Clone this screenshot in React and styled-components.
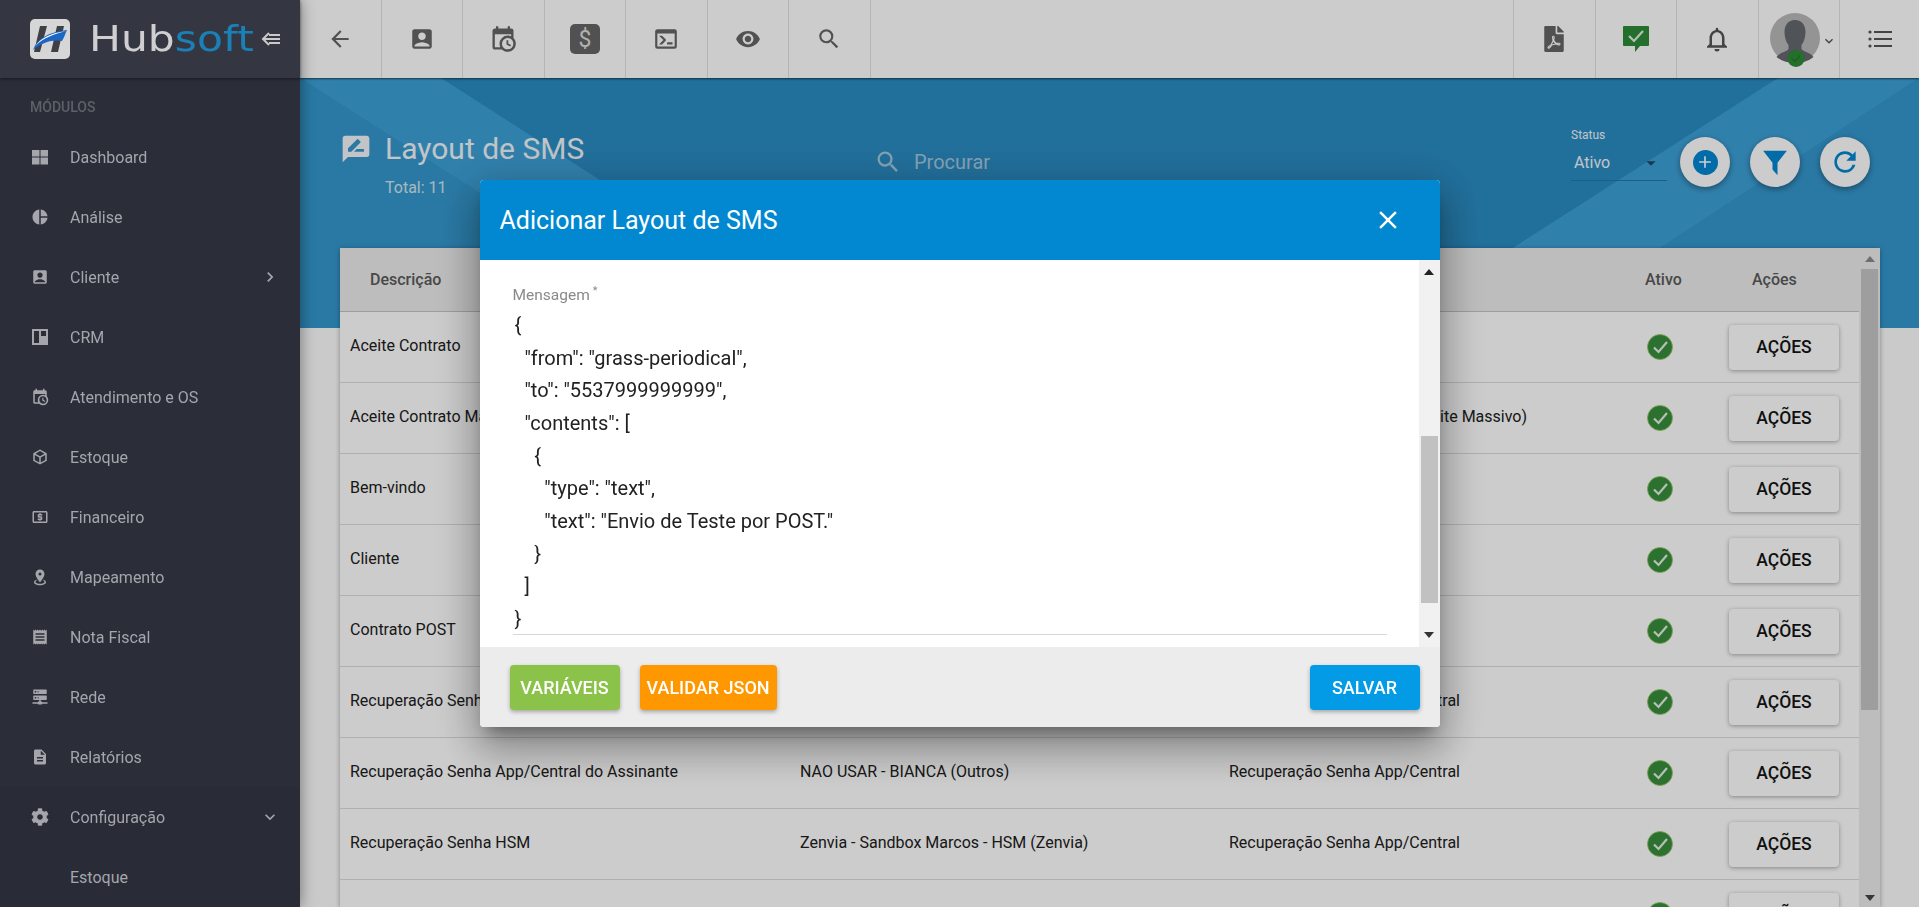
import React from "react";
import styled, { createGlobalStyle } from "styled-components";
import {
  MdArrowBack,
  MdAccountBox,
  MdVisibility,
  MdSearch,
  MdPieChart,
  MdLocalAtm,
  MdReceipt,
  MdDescription,
  MdChevronRight,
  MdExpandMore,
  MdClose,
  MdAdd,
  MdRefresh,
  MdArrowDropDown,
} from "react-icons/md";
import { FaCog, FaFilePdf } from "react-icons/fa";

const GlobalStyle = createGlobalStyle`
  html, body {
    margin: 0;
    height: 100%;
    overflow: hidden;
    background: #fff;
    font-family: Roboto, "Liberation Sans", sans-serif;
  }
  * { box-sizing: border-box; }
`;

const CALENDAR_CLOCK =
  "M15,13H16.5V15.82L18.94,17.23L18.19,18.53L15,16.69V13M19,8H5V19H9.67C9.24,18.09 9,17.07 9,16A7,7 0 0,1 16,9C17.07,9 18.09,9.24 19,9.67V8M5,21C3.89,21 3,20.1 3,19V5C3,3.89 3.89,3 5,3H6V1H8V3H16V1H18V3H19A2,2 0 0,1 21,5V11.1C22.24,12.36 23,14.09 23,16A7,7 0 0,1 16,23C14.09,23 12.36,22.24 11.1,21H5M16,11.15A4.85,4.85 0 0,0 11.15,16C11.15,18.68 13.32,20.85 16,20.85A4.85,4.85 0 0,0 20.85,16C20.85,13.32 18.68,11.15 16,11.15Z";
const CUBE =
  "M21,16.5C21,16.88 20.79,17.21 20.47,17.38L12.57,21.82C12.41,21.94 12.21,22 12,22C11.79,22 11.59,21.94 11.43,21.82L3.53,17.38C3.21,17.21 3,16.88 3,16.5V7.5C3,7.12 3.21,6.79 3.53,6.62L11.43,2.18C11.59,2.06 11.79,2 12,2C12.21,2 12.41,2.06 12.57,2.18L20.47,6.62C20.79,6.79 21,7.12 21,7.5V16.5M12,4.15L6.04,7.5L12,10.85L17.96,7.5L12,4.15M5,15.91L11,19.29V12.58L5,9.21V15.91M19,15.91V9.21L13,12.58V19.29L19,15.91Z";
const MARKER =
  "M12,2C15.31,2 18,4.66 18,7.95C18,12.41 12,19 12,19C12,19 6,12.41 6,7.95C6,4.66 8.69,2 12,2M12,6A2,2 0 0,0 10,8A2,2 0 0,0 12,10A2,2 0 0,0 14,8A2,2 0 0,0 12,6M20,19C20,21.21 16.42,23 12,23C7.58,23 4,21.21 4,19C4,17.71 5.22,16.56 7.11,15.83L7.75,16.74C6.67,17.19 6,17.81 6,18.5C6,19.88 8.69,21 12,21C15.31,21 18,19.88 18,18.5C18,17.81 17.33,17.19 16.25,16.74L16.89,15.83C18.78,16.56 20,17.71 20,19Z";
const SERVER =
  "M13,18H14A1,1 0 0,1 15,19H22V21H15A1,1 0 0,1 14,22H10A1,1 0 0,1 9,21H2V19H9A1,1 0 0,1 10,18H11V16H4A1,1 0 0,1 3,15V11A1,1 0 0,1 4,10H20A1,1 0 0,1 21,11V15A1,1 0 0,1 20,16H13V18M4,2H20A1,1 0 0,1 21,3V7A1,1 0 0,1 20,8H4A1,1 0 0,1 3,7V3A1,1 0 0,1 4,2M9,6H10V4H9V6M9,14H10V12H9V14M5,4V6H7V4H5M5,12V14H7V12H5Z";
const MESSAGE_DRAW =
  "M18,14H10.5L12.5,12H18M6,14V11.5L12.88,4.64C13.07,4.45 13.39,4.45 13.59,4.64L15.35,6.41C15.55,6.61 15.55,6.92 15.35,7.12L8.47,14M20,2H4A2,2 0 0,0 2,4V22L6,18H20A2,2 0 0,0 22,16V4C22,2.89 21.1,2 20,2Z";
const BELL =
  "M16,17H8V11C8,8.5 9.800,6.500 12,6.500C14.200,6.500 16,8.500 16,11M18,16V11C18,7.900 15.900,5.400 13,4.700V4A1,1 0 0,0 11,4V4.700C8.100,5.400 6,7.900 6,11V16L4,18V19H20V18M12,22A2,2 0 0,0 14,20H10A2,2 0 0,0 12,22Z";
const FILTER = "M2.5,3H21.5L14,12.5V22.5L10,18V12.5Z";
const CONSOLE =
  "M20,19V7H4V19H20M20,3A2,2 0 0,1 22,5V19A2,2 0 0,1 20,21H4A2,2 0 0,1 2,19V5C2,3.89 2.9,3 4,3H20M13,17V15H18V17H13M9.58,13L5.57,9H8.4L11.7,12.3C12.09,12.69 12.09,13.33 11.7,13.72L8.42,17H5.59L9.58,13Z";

const Glyph = ({ d, size = 24, color = "currentColor" }) => (
  <svg width={size} height={size} viewBox="0 0 24 24" fill={color}>
    <path d={d} />
  </svg>
);

const GridIcon = () => (
  <svg width="18" height="18" viewBox="0 0 18 18" fill="currentColor">
    <rect x="1" y="2" width="7.5" height="6.5" />
    <rect x="9.5" y="2" width="7.5" height="6.5" />
    <rect x="1" y="9.5" width="7.5" height="7" />
    <rect x="9.5" y="9.5" width="7.5" height="7" />
  </svg>
);

const BoardIcon = () => (
  <svg width="18" height="18" viewBox="0 0 18 18">
    <path fill="currentColor" fillRule="evenodd" d="M1 1h16v16H1zM3 3v12h5V3zM10 3v5h5V3z" />
  </svg>
);

const DollarBox = () => (
  <svg width="30" height="30" viewBox="0 0 30 30">
    <rect x="0" y="0" width="30" height="30" rx="5" fill="#666" />
    <text x="15" y="23" textAnchor="middle" fontSize="23" fill="#ddd" fontFamily="Roboto">$</text>
  </svg>
);

const ChatCheck = () => (
  <svg width="26" height="26" viewBox="0 0 26 26">
    <path d="M1 0h24a1 1 0 0 1 1 1v18a1 1 0 0 1-1 1h-8l-5 6v-6H1a1 1 0 0 1-1-1V1a1 1 0 0 1 1-1z" fill="#2e8b37" />
    <path d="M6 10l5 5 9-10" fill="none" stroke="#e3efe3" strokeWidth="2.2" />
  </svg>
);

const ListIcon = () => (
  <svg width="24" height="20" viewBox="0 0 24 20" fill="#555">
    <circle cx="2" cy="3" r="1.6" />
    <circle cx="2" cy="10" r="1.6" />
    <circle cx="2" cy="17" r="1.6" />
    <rect x="6" y="2" width="18" height="2" />
    <rect x="6" y="9" width="18" height="2" />
    <rect x="6" y="16" width="18" height="2" />
  </svg>
);

const Silhouette = () => (
  <svg width="50" height="54" viewBox="0 0 50 54">
    <circle cx="25" cy="25" r="25" fill="#b9b9b9" />
    <path
      d="M25 7c7 0 10.500 5 10.500 12 0 5-1.500 10-4 13v4c2 3 8 3 12 8-5 4-11 6-18.500 6s-13.500-2-18.500-6c4-5 10-5 12-8v-4c-2.500-3-4-8-4-13 0-7 3.500-12 10.500-12z"
      fill="#64686d"
    />
    <circle cx="26" cy="45.500" r="8.500" fill="#2e8b37" />
    <path d="M22 45.500l3 3 5-6" fill="none" stroke="#247a2e" strokeWidth="1.500" />
  </svg>
);

const SwitchArrow = () => (
  <svg width="20" height="14" viewBox="0 0 20 14" fill="none" stroke="#c9c9c9" strokeWidth="2">
    <path d="M8 1L2 7l6 6" />
    <path d="M3 7h16M8 3h11M8 11h11" />
  </svg>
);

const LogoMark = () => (
  <svg width="40" height="40" viewBox="0 0 40 40">
    <rect width="40" height="40" rx="5" fill="#d6d6d6" />
    <path d="M10 7h7l-7 26H4zM27 7h7l-6 26h-7z" fill="#3f4045" />
    <path d="M3 31C7 20 18 13 37 11c-2 4-3 8-5 11-8-2-20 1-29 9z" fill="#1c66c4" />
    <path d="M5 27C11 19 21 14 36 12 24 15 13 19 5 27z" fill="#fff" />
  </svg>
);

const CheckBadge = () => (
  <svg width="26" height="26" viewBox="0 0 26 26">
    <circle cx="13" cy="13" r="12.500" fill="#388e3c" stroke="#9ccc65" strokeWidth="0.800" />
    <path d="M7 13.500l4.500 4.500L20 8" fill="none" stroke="#e6efe2" strokeWidth="2.200" />
  </svg>
);

const Page = styled.div`
  display: flex;
  width: 100%;
  height: 100vh;
  overflow: hidden;
`;

const Sidebar = styled.aside`
  position: relative;
  z-index: 30;
  flex: 0 0 300px;
  display: flex;
  flex-direction: column;
  background: #2b2e39;
  color: #a4a6ac;
  box-shadow: 0 0 14px rgba(0, 0, 0, 0.45);
`;

const Brand = styled.div`
  flex: 0 0 78px;
  display: flex;
  align-items: center;
  padding-left: 30px;
  background: #343741;
  box-shadow: 0 1px 3px rgba(0, 0, 0, 0.5);
`;

const Wordmark = styled.span`
  margin: 0 21px 0 19px;
  font-family: "DejaVu Sans", sans-serif;
  font-size: 36px;
  line-height: 40px;
  color: #cfcfd1;
  transform: scaleX(1.18);
  transform-origin: left center;
  b {
    font-weight: 400;
    color: #1b80b8;
  }
`;

const Collapse = styled.span`
  display: flex;
  margin-left: 11px;
`;

const SectionLabel = styled.div`
  padding: 21px 0 0 30px;
  height: 49px;
  font-size: 14px;
  font-weight: 500;
  color: #5e6068;
`;

const Item = styled.div`
  flex: 0 0 60px;
  display: flex;
  align-items: center;
  padding-left: 31px;
  font-size: 16px;
  background: ${(p) => (p.$open ? "#292b36" : "transparent")};
`;

const ItemIcon = styled.span`
  flex: none;
  width: 18px;
  display: flex;
  justify-content: center;
  margin-right: 21px;
  font-size: 20px;
`;

const ItemArrow = styled.span`
  margin-left: auto;
  margin-right: 20px;
  display: flex;
  font-size: 20px;
`;

const Main = styled.div`
  flex: 1;
  min-width: 0;
  display: flex;
  flex-direction: column;
`;

const Toolbar = styled.header`
  position: relative;
  z-index: 2;
  flex: 0 0 78px;
  display: flex;
  background: #fff;
  box-shadow: 0 1px 2px rgba(0, 0, 0, 0.6);
`;

const ToolCell = styled.div`
  flex: 0 0 81.500px;
  display: flex;
  align-items: center;
  justify-content: center;
  color: #666;
  border-right: 1px solid #e2e2e2;
  font-size: 26px;
`;

const ToolSpacer = styled.div`
  flex: 1;
  border-right: 1px solid #e2e2e2;
`;

const AvatarCell = styled(ToolCell)`
  justify-content: flex-start;
  padding: 13px 0 0 11px;
  align-items: flex-start;
  overflow: hidden;
`;

const AvatarCaret = styled.span`
  margin: 20px 0 0 1px;
  display: flex;
  font-size: 16px;
  color: #555;
`;

const MenuCell = styled(ToolCell)`
  flex-basis: 79px;
  border-right: 0;
`;

const Content = styled.main`
  flex: 1;
  min-height: 0;
  background: #fdfdfd;
  display: flex;
  flex-direction: column;
`;

const Hero = styled.section`
  position: relative;
  flex: 0 0 250px;
  display: flex;
  align-items: flex-start;
  padding: 55px 49px 0 40px;
  background: #2a8cc3;
  overflow: hidden;
`;

const HeroPattern = styled.svg`
  position: absolute;
  inset: 0;
  width: 100%;
  height: 100%;
`;

const TitleBlock = styled.div`
  position: relative;
  flex: 0 0 534px;
`;

const TitleRow = styled.div`
  display: flex;
  align-items: center;
  gap: 13px;
  color: #f2f7fa;
`;

const PageTitle = styled.h1`
  margin: 0;
  font-size: 30px;
  font-weight: 400;
  line-height: 32px;
`;

const Total = styled.div`
  margin: 13px 0 0 45px;
  font-size: 16px;
  color: #d4e6f1;
`;

const SearchBox = styled.div`
  position: relative;
  flex: 1;
  display: flex;
  align-items: center;
  gap: 12px;
  margin-top: 15px;
  font-size: 20px;
  color: #a6cbe2;
`;

const StatusBox = styled.div`
  position: relative;
  flex: 0 0 96px;
  margin-top: -5px;
  height: 53px;
  border-bottom: 1px solid #2577a6;
  color: #f2f7fa;
`;

const StatusLabel = styled.div`
  font-size: 12px;
  line-height: 14px;
`;

const StatusValue = styled.div`
  display: flex;
  align-items: center;
  justify-content: space-between;
  margin: 10px 8px 0 3px;
  font-size: 16px;
  line-height: 20px;
  svg {
    color: #1b4a66;
    margin-right: -3px;
  }
`;

const RoundButtons = styled.div`
  position: relative;
  display: flex;
  gap: 20px;
  margin: 4px 0 0 13px;
`;

const RoundButton = styled.button`
  width: 50px;
  height: 50px;
  padding: 0;
  border: 0;
  border-radius: 50%;
  display: flex;
  align-items: center;
  justify-content: center;
  background: #fff;
  color: #0288d1;
  box-shadow: 0 2px 6px rgba(0, 0, 0, 0.4);
`;

const PlusDisc = styled.span`
  width: 25px;
  height: 25px;
  border-radius: 50%;
  display: flex;
  align-items: center;
  justify-content: center;
  background: #0288d1;
  color: #fff;
  font-size: 20px;
`;

const Card = styled.section`
  position: relative;
  flex: 1;
  min-height: 0;
  display: flex;
  margin: -80px 39px 0 40px;
  background: #fff;
  box-shadow: 0 1px 5px rgba(0, 0, 0, 0.35);
`;

const Table = styled.div`
  flex: 1;
  min-width: 0;
  overflow: hidden;
`;

const Row = styled.div`
  display: grid;
  grid-template-columns: 460px 429px 391px 80px 159px;
  align-items: center;
  height: ${(p) => (p.$head ? "64px" : "71px")};
  background: ${(p) => (p.$head ? "#ededed" : "#fff")};
  border-bottom: 1px solid ${(p) => (p.$head ? "#c5c5c5" : "#dcdcdc")};
`;

const Cell = styled.div`
  padding-left: ${(p) => p.$inset || 0}px;
  padding-bottom: 4px;
  font-size: 16px;
  color: #202020;
  white-space: nowrap;
`;

const HeadCell = styled.div`
  padding-left: ${(p) => p.$inset || 0}px;
  font-size: 16px;
  font-weight: 500;
  color: #5a5a5a;
`;

const BadgeCell = styled.div`
  display: flex;
  justify-content: center;
`;

const ActionCell = styled.div`
  padding-left: 29px;
`;

const ActionButton = styled.button`
  width: 110px;
  height: 45px;
  padding: 0;
  border: 0;
  border-radius: 4px;
  background: #fff;
  font-family: inherit;
  font-size: 17.500px;
  font-weight: 500;
  color: #141414;
  box-shadow: 0 1px 4px rgba(0, 0, 0, 0.35);
`;

const Rail = styled.div`
  flex: 0 0 ${(p) => p.$width}px;
  display: flex;
  flex-direction: column;
  align-items: center;
  background: ${(p) => p.$track};
  padding: 0 2px;
`;

const RailArrow = styled.span`
  flex: 0 0 ${(p) => p.$box}px;
  display: flex;
  align-items: center;
  justify-content: center;
  &::before {
    content: "";
    border-left: 5px solid transparent;
    border-right: 5px solid transparent;
    ${(p) => (p.$down ? "border-top" : "border-bottom")}: 6px solid ${(p) => p.$color};
  }
`;

const RailGap = styled.div`
  flex: ${(p) => (p.$fixed ? `0 0 ${p.$fixed}px` : "1")};
`;

const RailThumb = styled.div`
  flex: 0 0 ${(p) => p.$height}px;
  align-self: stretch;
  background: ${(p) => p.$color};
`;

const Backdrop = styled.div`
  position: fixed;
  inset: 0;
  z-index: 20;
  display: flex;
  align-items: center;
  justify-content: center;
  background: rgba(0, 0, 0, 0.2);
`;

const Modal = styled.div`
  width: 960px;
  height: 547px;
  display: flex;
  flex-direction: column;
  border-radius: 4px;
  overflow: hidden;
  background: #fff;
  box-shadow: 0 11px 15px -7px rgba(0, 0, 0, 0.35), 0 24px 38px 3px rgba(0, 0, 0, 0.2),
    0 9px 46px 8px rgba(0, 0, 0, 0.18);
`;

const ModalHead = styled.div`
  flex: 0 0 80px;
  display: flex;
  align-items: center;
  justify-content: space-between;
  padding: 0 37px 0 20px;
  background: #0288d1;
  color: #fff;
`;

const ModalTitle = styled.h2`
  margin: 0;
  font-size: 25px;
  font-weight: 400;
`;

const ModalBody = styled.div`
  flex: 1;
  min-height: 0;
  display: flex;
`;

const Field = styled.div`
  flex: 1;
  padding: 27px 32px 0 33px;
`;

const FieldLabel = styled.label`
  display: block;
  font-size: 15.500px;
  line-height: 16px;
  color: #8a8a8a;
  sup {
    margin-left: 3px;
    font-size: 11px;
    line-height: 0;
  }
`;

const JsonText = styled.pre`
  margin: 6px 0 0;
  padding: 0 0 0 2px;
  height: 326px;
  font-family: inherit;
  font-size: 20px;
  line-height: 32.650px;
  color: #222;
  border-bottom: 1px solid #d8d8d8;
`;

const ModalFoot = styled.div`
  flex: 0 0 80px;
  display: flex;
  align-items: flex-start;
  gap: 20px;
  padding: 18px 20px 0 30px;
  background: #ececec;
`;

const FootButton = styled.button`
  height: 45px;
  min-width: 110px;
  padding: 0 7px;
  margin-left: ${(p) => (p.$push ? "auto" : "0")};
  border: 0;
  border-radius: 4px;
  background: ${(p) => p.$color};
  font-family: inherit;
  font-size: 18px;
  font-weight: 500;
  color: #fff;
  box-shadow: 0 2px 4px rgba(0, 0, 0, 0.3);
`;

const menu = [
  { label: "Dashboard", icon: <GridIcon /> },
  { label: "Análise", icon: <MdPieChart /> },
  { label: "Cliente", icon: <MdAccountBox />, arrow: <MdChevronRight /> },
  { label: "CRM", icon: <BoardIcon /> },
  { label: "Atendimento e OS", icon: <Glyph d={CALENDAR_CLOCK} size={20} /> },
  { label: "Estoque", icon: <Glyph d={CUBE} size={20} /> },
  { label: "Financeiro", icon: <MdLocalAtm /> },
  { label: "Mapeamento", icon: <Glyph d={MARKER} size={20} /> },
  { label: "Nota Fiscal", icon: <MdReceipt /> },
  { label: "Rede", icon: <Glyph d={SERVER} size={20} /> },
  { label: "Relatórios", icon: <MdDescription /> },
  { label: "Configuração", icon: <FaCog />, arrow: <MdExpandMore />, open: true },
  { label: "Estoque", open: true },
];

const rows = [
  ["Aceite Contrato", "", ""],
  ["Aceite Contrato Massivo", "", "Aceite Contrato Massivo (Aceite Massivo)"],
  ["Bem-vindo", "", ""],
  ["Cliente", "", ""],
  ["Contrato POST", "", ""],
  ["Recuperação Senha App/Central", "", "Recuperação Senha App/Central"],
  ["Recuperação Senha App/Central do Assinante", "NAO USAR - BIANCA (Outros)", "Recuperação Senha App/Central"],
  ["Recuperação Senha HSM", "Zenvia - Sandbox Marcos - HSM (Zenvia)", "Recuperação Senha App/Central"],
  ["Recuperação Senha", "Zenvia", "Recuperação Senha App/Central"],
];

const json = `{
  "from": "grass-periodical",
  "to": "5537999999999",
  "contents": [
    {
      "type": "text",
      "text": "Envio de Teste por POST."
    }
  ]
}`;

export default function App() {
  return (
    <>
      <GlobalStyle />
      <Page>
        <Sidebar>
          <Brand>
            <LogoMark />
            <Wordmark>
              Hub<b>soft</b>
            </Wordmark>
            <Collapse>
              <SwitchArrow />
            </Collapse>
          </Brand>
          <SectionLabel>MÓDULOS</SectionLabel>
          {menu.map((m, i) => (
            <Item key={i} $open={m.open}>
              <ItemIcon>{m.icon}</ItemIcon>
              {m.label}
              {m.arrow && <ItemArrow>{m.arrow}</ItemArrow>}
            </Item>
          ))}
        </Sidebar>

        <Main>
          <Toolbar>
            <ToolCell><MdArrowBack /></ToolCell>
            <ToolCell><MdAccountBox /></ToolCell>
            <ToolCell><Glyph d={CALENDAR_CLOCK} size={28} /></ToolCell>
            <ToolCell><DollarBox /></ToolCell>
            <ToolCell><Glyph d={CONSOLE} size={26} /></ToolCell>
            <ToolCell><MdVisibility /></ToolCell>
            <ToolCell><MdSearch /></ToolCell>
            <ToolSpacer />
            <ToolCell><FaFilePdf size={26} /></ToolCell>
            <ToolCell><ChatCheck /></ToolCell>
            <ToolCell><Glyph d={BELL} size={30} color="#555" /></ToolCell>
            <AvatarCell>
              <Silhouette />
              <AvatarCaret><MdExpandMore /></AvatarCaret>
            </AvatarCell>
            <MenuCell><ListIcon /></MenuCell>
          </Toolbar>

          <Content>
            <Hero>
              <HeroPattern viewBox="0 0 1619 250" preserveAspectRatio="none">
                <polygon points="0,0 391,250 0,250" fill="#3598cf" />
                <polygon points="0,0 141,0 406,170 266,170" fill="#3da1d8" />
                <polygon points="1619,0 1619,250 1238,250" fill="#3598cf" />
                <polygon points="1478,0 1619,0 1238,250 1088,250" fill="#3da1d8" />
              </HeroPattern>
              <TitleBlock>
                <TitleRow>
                  <Glyph d={MESSAGE_DRAW} size={32} />
                  <PageTitle>Layout de SMS</PageTitle>
                </TitleRow>
                <Total>Total: 11</Total>
              </TitleBlock>
              <SearchBox>
                <MdSearch size={28} />
                Procurar
              </SearchBox>
              <StatusBox>
                <StatusLabel>Status</StatusLabel>
                <StatusValue>
                  Ativo
                  <MdArrowDropDown size={22} />
                </StatusValue>
              </StatusBox>
              <RoundButtons>
                <RoundButton><PlusDisc><MdAdd /></PlusDisc></RoundButton>
                <RoundButton><Glyph d={FILTER} size={30} /></RoundButton>
                <RoundButton><MdRefresh size={32} /></RoundButton>
              </RoundButtons>
            </Hero>

            <Card>
              <Table>
                <Row $head>
                  <HeadCell $inset={30}>Descrição</HeadCell>
                  <HeadCell />
                  <HeadCell />
                  <HeadCell $inset={25}>Ativo</HeadCell>
                  <HeadCell $inset={52}>Ações</HeadCell>
                </Row>
                {rows.map((r, i) => (
                  <Row key={i}>
                    <Cell $inset={10}>{r[0]}</Cell>
                    <Cell>{r[1]}</Cell>
                    <Cell>{r[2]}</Cell>
                    <BadgeCell><CheckBadge /></BadgeCell>
                    <ActionCell><ActionButton>AÇÕES</ActionButton></ActionCell>
                  </Row>
                ))}
              </Table>
              <Rail $width={21} $track="#ededed">
                <RailArrow $box={21} $color="#8a8a8a" />
                <RailThumb $height={441} $color="#c6c6c6" />
                <RailGap />
                <RailArrow $box={18} $down $color="#444" />
              </Rail>
            </Card>
          </Content>
        </Main>
      </Page>

      <Backdrop>
        <Modal>
          <ModalHead>
            <ModalTitle>Adicionar Layout de SMS</ModalTitle>
            <MdClose size={30} />
          </ModalHead>
          <ModalBody>
            <Field>
              <FieldLabel>Mensagem<sup>*</sup></FieldLabel>
              <JsonText>{json}</JsonText>
            </Field>
            <Rail $width={21} $track="#f1f1f1">
              <RailArrow $box={24} $color="#222" />
              <RailGap $fixed={152} />
              <RailThumb $height={167} $color="#c1c1c1" />
              <RailGap />
              <RailArrow $box={24} $down $color="#333" />
            </Rail>
          </ModalBody>
          <ModalFoot>
            <FootButton $color="#8bc34a">VARIÁVEIS</FootButton>
            <FootButton $color="#ff9800">VALIDAR JSON</FootButton>
            <FootButton $color="#039be5" $push>SALVAR</FootButton>
          </ModalFoot>
        </Modal>
      </Backdrop>
    </>
  );
}
